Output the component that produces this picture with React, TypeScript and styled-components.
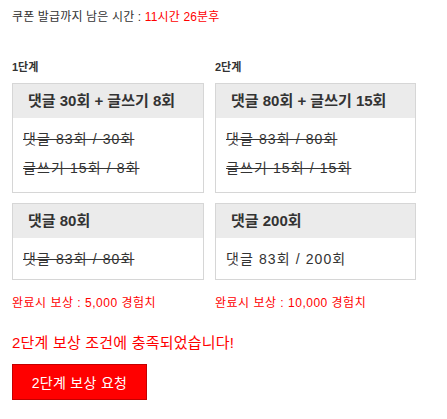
import React from 'react'
import styled, { createGlobalStyle } from 'styled-components'

const GlobalStyle = createGlobalStyle`
  body {
    margin: 0;
    background: #fff;
    font-family: 'Liberation Sans', 'Noto Sans CJK KR', sans-serif;
    color: #333;
  }
`

type Line = { text: string; done: boolean }
type Mission = { title: string; lines: Line[] }
type Stage = { label: string; width: number; missions: Mission[]; reward: string }

const stages: Stage[] = [
  {
    label: '1단계',
    width: 192,
    missions: [
      {
        title: '댓글 30회 + 글쓰기 8회',
        lines: [
          { text: '댓글 83회 / 30회', done: true },
          { text: '글쓰기 15회 / 8회', done: true },
        ],
      },
      { title: '댓글 80회', lines: [{ text: '댓글 83회 / 80회', done: true }] },
    ],
    reward: '완료시 보상 : 5,000 경험치',
  },
  {
    label: '2단계',
    width: 201,
    missions: [
      {
        title: '댓글 80회 + 글쓰기 15회',
        lines: [
          { text: '댓글 83회 / 80회', done: true },
          { text: '글쓰기 15회 / 15회', done: true },
        ],
      },
      { title: '댓글 200회', lines: [{ text: '댓글 83회 / 200회', done: false }] },
    ],
    reward: '완료시 보상 : 10,000 경험치',
  },
]

const App = () => {
  return (
    <Page>
      <GlobalStyle />
      <Timer>
        쿠폰 발급까지 남은 시간 : <Red>11시간 26분후</Red>
      </Timer>
      <Stages>
        {stages.map(s => (
          <Column key={s.label} $width={s.width}>
            <StageLabel>{s.label}</StageLabel>
            {s.missions.map(m => (
              <Box key={m.title}>
                <BoxHeader>{m.title}</BoxHeader>
                <BoxBody $tall={m.lines.length > 1}>
                  {m.lines.map(l => (
                    <Progress key={l.text} $done={l.done}>
                      {l.text}
                    </Progress>
                  ))}
                </BoxBody>
              </Box>
            ))}
            <Reward>{s.reward}</Reward>
          </Column>
        ))}
      </Stages>
      <Notice>2단계 보상 조건에 충족되었습니다!</Notice>
      <RequestButton type='button'>2단계 보상 요청</RequestButton>
    </Page>
  )
}

const Page = styled.main`
  padding: 10px 12px;
`

const Timer = styled.p`
  margin: 0;
  font-size: 12px;
  line-height: 14px;
  letter-spacing: 0.15px;
`

const Red = styled.span`
  color: #ff0000;
`

const Stages = styled.section`
  display: flex;
  gap: 11px;
  margin-top: 37px;
`

const Column = styled.div<{ $width: number }>`
  display: flex;
  flex-direction: column;
  width: ${p => p.$width}px;
  flex: none;
`

const StageLabel = styled.h3`
  margin: 0 0 10px;
  font-size: 11px;
  line-height: 12px;
  font-weight: bold;
  color: #333;
`

const Box = styled.div`
  border: 1px solid #d6d6d6;
  margin-bottom: 10px;
  &:last-of-type {
    margin-bottom: 0;
  }
`

const BoxHeader = styled.div`
  background: #ebebeb;
  height: 34px;
  line-height: 34px;
  padding: 0 15px;
  font-size: 15px;
  font-weight: bold;
  white-space: nowrap;
  color: #333;
`

const BoxBody = styled.div<{ $tall: boolean }>`
  padding: 7px 10px ${p => (p.$tall ? 10 : 6)}px;
  display: flex;
  flex-direction: column;
  gap: 1px;
`

const Progress = styled.div<{ $done: boolean }>`
  font-size: 14px;
  line-height: 28px;
  letter-spacing: 1.1px;
  white-space: nowrap;
  text-decoration: ${p => (p.$done ? 'line-through' : 'none')};
`

const Reward = styled.p`
  margin: 16px 0 0;
  font-size: 12px;
  line-height: 14px;
  letter-spacing: 0.5px;
  color: #ff0000;
`

const Notice = styled.p`
  margin: 24px 0 0;
  font-size: 15px;
  line-height: 18px;
  letter-spacing: 0.2px;
  color: #ff0000;
`

const RequestButton = styled.button`
  display: block;
  margin-top: 12px;
  width: 135px;
  height: 36px;
  background: #ff0000;
  border: 1px solid #c40000;
  color: #fff;
  font-family: inherit;
  font-size: 14px;
  letter-spacing: 0.3px;
  cursor: pointer;
`

export default App
